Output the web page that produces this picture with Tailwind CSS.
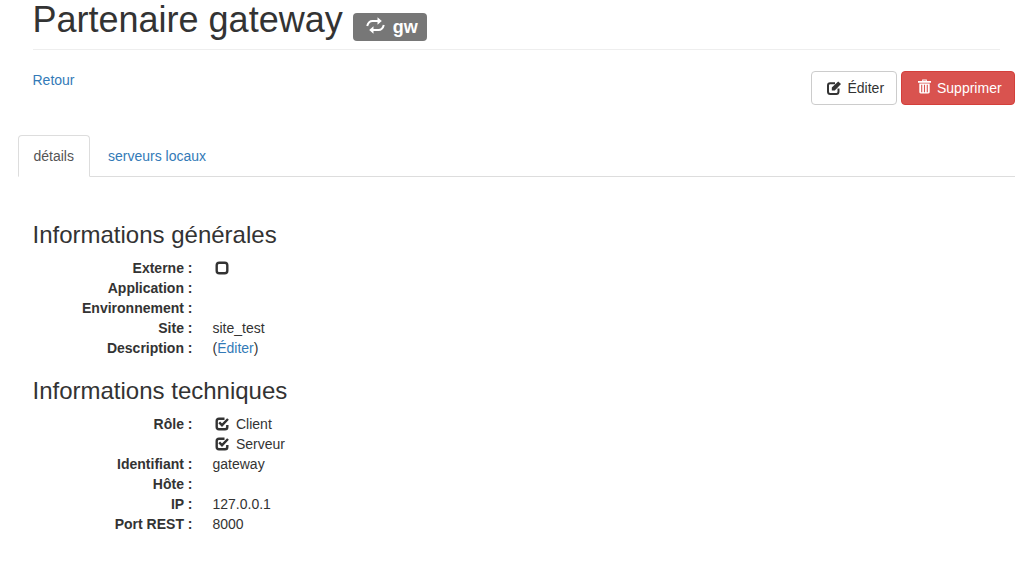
<!DOCTYPE html>
<html lang="fr">
<head>
    <meta charset="UTF-8">
    <title>Partenaire gateway</title>
    <script src="https://cdn.jsdelivr.net/npm/@tailwindcss/browser@4"></script>
</head>
<body class="bg-white text-[#333] text-[14px] leading-[20px] font-['Liberation_Sans',Arial,sans-serif] h-[564px] overflow-hidden">
    <div class="pl-[18px] pr-[9px]">
        <!-- page header -->
        <div class="ml-[14.5px] mr-[15px] pb-[9px] border-b border-[#eee]">
            <h1 class="h-[40px] text-[36px] leading-[40px] font-normal flex items-start">
                Partenaire gateway
                <span class="ml-[10px] mt-[13px] h-[28px] w-[74px] bg-[#777] rounded-[4px] text-white text-[18px] font-bold flex items-center pl-[13px] gap-[8px] leading-none">
                    <svg class="w-[19px] h-[17px] shrink-0 -mt-[3px]" viewBox="0 0 19 17">
                        <path d="M1.2 9 C2 6 3.5 4 6.5 4 H12" fill="none" stroke="white" stroke-width="2"/>
                        <path d="M11.5 0.2 L15.8 4 L11.5 7.8 Z" fill="white"/>
                        <path d="M17.8 8 C17 11 15.5 13 12.5 13 H7" fill="none" stroke="white" stroke-width="2"/>
                        <path d="M7.5 9.2 L3.2 13 L7.5 16.8 Z" fill="white"/>
                    </svg>
                    <span>gw</span>
                </span>
            </h1>
        </div>

        <!-- actions -->
        <div class="flex justify-between items-start pl-[14.5px] pt-[20px]">
            <a href="#" class="text-[#337ab7]">Retour</a>
            <div class="flex gap-[4px] mt-[1px] w-[204px]">
                <button class="h-[34px] w-[86px] shrink-0 border border-[#ccc] rounded-[4px] bg-white text-[#333] flex items-center pl-[14.5px] gap-[7px]">
                    <svg class="w-[14px] h-[14px] shrink-0" viewBox="0 0 14 14" fill="none"><path d="M11.5 7.5 V10.5 C11.5 12 10.8 13 9.3 13 H3.2 C1.8 13 1 12 1 10.5 V4.5 C1 3 1.8 2.2 3.2 2.2 H8" stroke="#333" stroke-width="2"/><path d="M4.8 6.6 L4.8 9.6 L7.8 9.6 L14 3 L11.2 0.4 Z" fill="#333"/></svg>
                    Éditer
                </button>
                <button class="h-[34px] w-[114px] shrink-0 border border-[#d43f3a] rounded-[4px] bg-[#d9534f] text-white flex items-center pl-[15.5px] gap-[6.5px]">
                    <svg class="w-[13px] h-[15px] shrink-0 -mt-[3px]" viewBox="0 0 14 15" fill="white"><path d="M4.5 0 H9.5 V1.6 H14 V3.4 H0 V1.6 H4.5 Z M5.6 1 V1.6 H8.4 V1 Z" fill-rule="evenodd"/><path d="M1.4 4.2 H12.6 V13.5 C12.6 14.5 12 15 11 15 H3 C2 15 1.4 14.5 1.4 13.5 Z M3.4 5.6 V13.6 H4.6 V5.6 Z M6.4 5.6 V13.6 H7.6 V5.6 Z M9.4 5.6 V13.6 H10.6 V5.6 Z" fill-rule="evenodd"/></svg>
                    Supprimer
                </button>
            </div>
        </div>
    </div>

    <!-- tabs -->
    <div class="ml-[18px] mr-[9px] mt-[30px] h-[42px] border-b border-[#ddd] flex">
        <a href="#" class="h-[42px] w-[72px] shrink-0 pl-[14.5px] pt-[10px] border border-[#ddd] border-b-white rounded-t-[4px] bg-white text-[#555]">détails</a>
        <a href="#" class="h-[42px] ml-[2px] px-[16px] pt-[11px] text-[#337ab7]">serveurs locaux</a>
    </div>

    <div class="pl-[32.5px] pt-[30px]">
        <h3 class="text-[24px] leading-[26px] font-normal mb-[10px] mt-[15px]">Informations générales</h3>
        <dl class="grid grid-cols-[160px_1fr] gap-x-[20px]">
            <dt class="font-bold text-right">Externe :</dt>
            <dd class="pl-[2.5px] flex items-center"><svg class="w-[14px] h-[14px]" viewBox="0 0 14 14" fill="none" stroke="#333" stroke-width="2.4"><rect x="1.7" y="1.7" width="10.6" height="10.6" rx="2.6"/></svg></dd>
            <dt class="font-bold text-right">Application :</dt><dd class="h-[20px]"></dd>
            <dt class="font-bold text-right">Environnement :</dt><dd class="h-[20px]"></dd>
            <dt class="font-bold text-right">Site :</dt><dd>site_test</dd>
            <dt class="font-bold text-right">Description :</dt><dd>(<a href="#" class="text-[#337ab7]">Éditer</a>)</dd>
        </dl>

        <h3 class="text-[24px] leading-[26px] font-normal mt-[20px] mb-[10px]">Informations techniques</h3>
        <dl class="grid grid-cols-[160px_1fr] gap-x-[20px]">
            <dt class="font-bold text-right">Rôle :</dt>
            <dd class="pl-[2.5px] flex items-center gap-[7px]"><svg class="w-[14px] h-[14px]" viewBox="0 0 14 14" fill="none" stroke="#333" stroke-width="2.4"><path d="M12.3 8 V10 C12.3 11.6 11.6 12.3 10 12.3 H4 C2.4 12.3 1.7 11.6 1.7 10 V4 C1.7 2.4 2.4 1.7 4 1.7 H9.5"/><path d="M4.2 5.4 L7 8.2 L13 2"/></svg>Client</dd>
            <dt></dt>
            <dd class="pl-[2.5px] flex items-center gap-[7px]"><svg class="w-[14px] h-[14px]" viewBox="0 0 14 14" fill="none" stroke="#333" stroke-width="2.4"><path d="M12.3 8 V10 C12.3 11.6 11.6 12.3 10 12.3 H4 C2.4 12.3 1.7 11.6 1.7 10 V4 C1.7 2.4 2.4 1.7 4 1.7 H9.5"/><path d="M4.2 5.4 L7 8.2 L13 2"/></svg>Serveur</dd>
            <dt class="font-bold text-right">Identifiant :</dt><dd>gateway</dd>
            <dt class="font-bold text-right">Hôte :</dt><dd class="h-[20px]"></dd>
            <dt class="font-bold text-right">IP :</dt><dd>127.0.0.1</dd>
            <dt class="font-bold text-right">Port REST :</dt><dd>8000</dd>
        </dl>
    </div>
</body>
</html>
